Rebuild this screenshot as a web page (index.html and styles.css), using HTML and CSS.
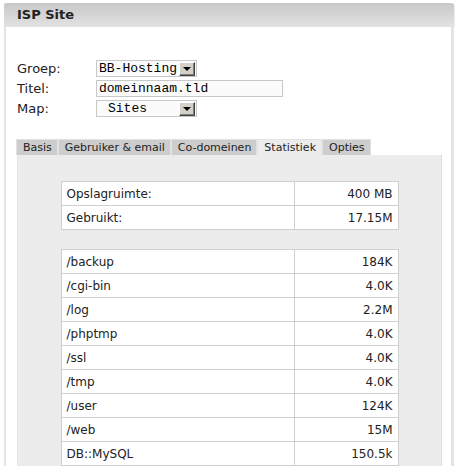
FILE: index.html
```html
<!DOCTYPE html>
<html>
<head>
<meta charset="utf-8">
<link rel="stylesheet" href="styles.css">
</head>
<body>
<div class="box">
  <div class="head">ISP Site</div>
  <div class="main">
    <div class="form">
      <label class="lbl">Groep:</label>
      <div class="sel"><span class="val">BB-Hosting</span><span class="arrow"></span></div>
      <label class="lbl">Titel:</label>
      <div class="inp">domeinnaam.tld</div>
      <label class="lbl">Map:</label>
      <div class="sel"><span class="val pad">Sites</span><span class="arrow"></span></div>
    </div>
    <div class="tabs">
      <span class="tab">Basis</span><span class="tab">Gebruiker &amp; email</span><span class="tab">Co-domeinen</span><span class="tab active">Statistiek</span><span class="tab">Opties</span>
    </div>
    <div class="panel">
      <table class="stats">
        <tr><td class="k">Opslagruimte:</td><td class="v">400 MB</td></tr>
        <tr><td class="k">Gebruikt:</td><td class="v">17.15M</td></tr>
      </table>
      <table class="stats second">
        <tr><td class="k">/backup</td><td class="v">184K</td></tr>
        <tr><td class="k">/cgi-bin</td><td class="v">4.0K</td></tr>
        <tr><td class="k">/log</td><td class="v">2.2M</td></tr>
        <tr><td class="k">/phptmp</td><td class="v">4.0K</td></tr>
        <tr><td class="k">/ssl</td><td class="v">4.0K</td></tr>
        <tr><td class="k">/tmp</td><td class="v">4.0K</td></tr>
        <tr><td class="k">/user</td><td class="v">124K</td></tr>
        <tr><td class="k">/web</td><td class="v">15M</td></tr>
        <tr><td class="k">DB::MySQL</td><td class="v">150.5k</td></tr>
      </table>
    </div>
  </div>
</div>
</body>
</html>
```
FILE: styles.css
```css
html, body {
  margin: 0;
  padding: 0;
  background: #fff;
  font-family: "DejaVu Sans", Verdana, sans-serif;
  color: #222;
}
.box {
  margin: 3px 0 0 4px;
  width: 450px;
}
.head {
  height: 24px;
  line-height: 24px;
  padding-left: 13px;
  font-size: 13px;
  font-weight: bold;
  color: #222;
  background: linear-gradient(#c8c8c8, #e2e2e2);
  border-radius: 2px 3px 0 0;
  box-shadow: 1px 0 0 #ececec;
}
.main {
  border-left: 2px solid #e4e4e4;
  border-right: 3px solid #e4e4e4;
  padding: 33px 9px 0 11px;
  height: 420px;
  overflow: hidden;
}
.form {
  display: grid;
  grid-template-columns: 79px auto;
  grid-auto-rows: 17px;
  row-gap: 3px;
  align-items: center;
}
.lbl {
  font-size: 13px;
  color: #222;
}
.sel, .inp {
  box-sizing: border-box;
  height: 17px;
  border: 1px solid #c8c8c8;
  background: #fbfbfb;
  font-family: "Liberation Mono", "Courier New", monospace;
  font-size: 13px;
  line-height: 15px;
  color: #000;
}
.sel {
  width: 101px;
  display: flex;
  align-items: center;
  padding-left: 2px;
}
.val {
  flex: 1;
}
.val.pad {
  padding-left: 9px;
}
.arrow {
  box-sizing: border-box;
  width: 16px;
  height: 14px;
  margin-right: 1px;
  background: #d4d0c8;
  border-top: 1px solid #fff;
  border-left: 1px solid #fff;
  border-right: 1px solid #404040;
  border-bottom: 1px solid #404040;
  box-shadow: inset -1px -1px 0 #808080;
  position: relative;
}
.arrow::after {
  content: "";
  position: absolute;
  left: 3px;
  top: 4px;
  border-left: 4px solid transparent;
  border-right: 4px solid transparent;
  border-top: 4px solid #000;
}
.inp {
  width: 187px;
  padding-left: 2px;
}
.tabs {
  margin-top: 22px;
  display: flex;
  height: 16px;
  margin-left: -1px;
}
.tab {
  box-sizing: border-box;
  height: 16px;
  line-height: 15px;
  font-size: 11px;
  padding: 0 5px 0 6px;
  background: #cdcdcd;
  border: 1px solid #e2e2e2;
  border-bottom: 0;
  color: #222;
}
.tab.active {
  background: #ececec;
}
.panel {
  background: #ececec;
  border-left: 1px solid #e6e6e6;
  border-right: 1px solid #dedede;
  padding-top: 26px;
  height: 400px;
}
.stats {
  width: 338px;
  margin: 0 auto;
  border-collapse: collapse;
  background: #fff;
  font-size: 12px;
}
.stats td {
  border: 1px solid #cfcfcf;
  height: 23px;
  padding: 0 5px;
  color: #222;
}
.stats td.k {
  width: 222px;
}
.stats td.v {
  text-align: right;
}
.second {
  margin-top: 19px;
}
```
